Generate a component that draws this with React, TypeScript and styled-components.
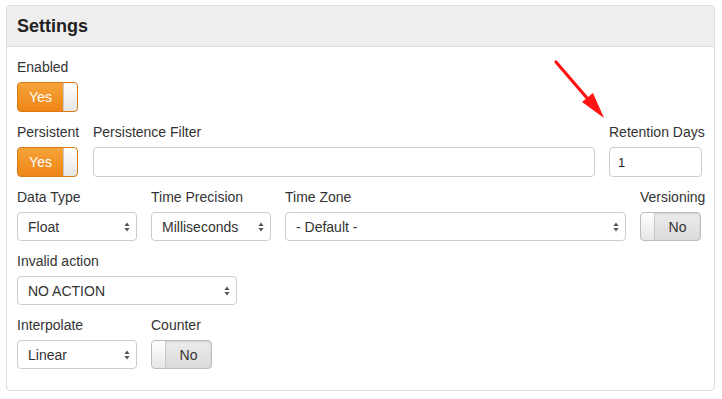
import React from "react";
import styled, { createGlobalStyle } from "styled-components";

const GlobalStyle = createGlobalStyle`
  html, body { margin: 0; padding: 0; background: #ffffff; }
  body { font-family: "Liberation Sans", Arial, sans-serif; color: #333333; }
  * { box-sizing: border-box; }
`;

const Page = styled.div`
  position: relative;
  width: 722px;
  height: 399px;
  padding: 5px 0 0 6px;
`;

const Panel = styled.div`
  width: 709px;
  height: 386px;
  border: 1px solid #dcdcdc;
  border-radius: 4px;
  background: #ffffff;
  overflow: hidden;
`;

const Header = styled.div`
  height: 41px;
  background: #eeeeee;
  border-bottom: 1px solid #dddddd;
  display: flex;
  align-items: center;
  padding: 0 10px;
`;

const Title = styled.h3`
  margin: 0;
  font-size: 18px;
  font-weight: bold;
  color: #222222;
  line-height: 20px;
`;

const Body = styled.div`
  padding: 10px 10px 0 10px;
  display: flex;
  flex-direction: column;
  gap: 10px;
`;

const Row = styled.div`
  display: flex;
  gap: 14px;
`;

const Field = styled.div<{ $w?: number }>`
  display: flex;
  flex-direction: column;
  width: ${(p) => (p.$w ? `${p.$w}px` : "auto")};
  flex: 0 0 auto;
`;

const Label = styled.label`
  font-size: 14px;
  line-height: 20px;
  height: 20px;
  margin-bottom: 5px;
  color: #333333;
  white-space: nowrap;
`;

const Toggle = styled.div<{ $on: boolean; $h: number }>`
  width: 61px;
  height: ${(p) => p.$h}px;
  border-radius: 4px;
  display: flex;
  flex-direction: ${(p) => (p.$on ? "row" : "row-reverse")};
  overflow: hidden;
  border: 1px solid ${(p) => (p.$on ? "#d97a16" : "#bdbdbd")};
  background: ${(p) =>
    p.$on
      ? "linear-gradient(to bottom, #f7a43a, #ee8516)"
      : "linear-gradient(to bottom, #ececec, #dadada)"};
  box-shadow: ${(p) => (p.$on ? "none" : "inset 0 1px 2px rgba(0,0,0,0.12)")};
`;

const ToggleText = styled.span<{ $on: boolean }>`
  flex: 1;
  display: flex;
  align-items: center;
  justify-content: center;
  font-size: 14px;
  color: ${(p) => (p.$on ? "#ffffff" : "#333333")};
  font-weight: normal;
`;

const Knob = styled.span<{ $on: boolean }>`
  width: 14px;
  height: 100%;
  background: linear-gradient(to bottom, #ffffff, #e6e6e6);
  border-${(p) => (p.$on ? "left" : "right")}: 1px solid #c8c8c8;
  border-radius: ${(p) => (p.$on ? "0 3px 3px 0" : "3px 0 0 3px")};
`;

const TextInput = styled.div<{ $h: number }>`
  height: ${(p) => p.$h}px;
  border: 1px solid #cccccc;
  border-radius: 4px;
  background: #ffffff;
  font-size: 13px;
  display: flex;
  align-items: center;
  padding: 0 8px;
  color: #222222;
`;

const Select = styled.div<{ $w?: number }>`
  width: ${(p) => (p.$w ? `${p.$w}px` : "100%")};
  height: 29px;
  border: 1px solid #cccccc;
  border-radius: 4px;
  background: #ffffff;
  font-size: 14px;
  color: #333333;
  display: flex;
  align-items: center;
  justify-content: space-between;
  padding: 0 6px 0 10px;
`;

const Arrows = () => (
  <svg width="6" height="10" viewBox="0 0 6 10">
    <path d="M3 0.5 L5.6 4 L0.4 4 Z" fill="#555" />
    <path d="M3 9.5 L5.6 6 L0.4 6 Z" fill="#555" />
  </svg>
);

const Annotation = styled.svg`
  position: absolute;
  left: 550px;
  top: 55px;
`;

const SwitchCtl = ({ on, h }: { on: boolean; h: number }) => (
  <Toggle $on={on} $h={h}>
    <ToggleText $on={on}>{on ? "Yes" : "No"}</ToggleText>
    <Knob $on={on} />
  </Toggle>
);

const SelectCtl = ({ value, w }: { value: string; w?: number }) => (
  <Select $w={w}>
    <span>{value}</span>
    <Arrows />
  </Select>
);

export default function App() {
  return (
    <Page>
      <GlobalStyle />
      <Panel>
        <Header>
          <Title>Settings</Title>
        </Header>
        <Body>
          <Row>
            <Field $w={61}>
              <Label>Enabled</Label>
              <SwitchCtl on h={30} />
            </Field>
          </Row>
          <Row>
            <Field $w={62}>
              <Label>Persistent</Label>
              <SwitchCtl on h={30} />
            </Field>
            <Field $w={502}>
              <Label>Persistence Filter</Label>
              <TextInput $h={30} />
            </Field>
            <Field $w={93}>
              <Label>Retention Days</Label>
              <TextInput $h={30}>1</TextInput>
            </Field>
          </Row>
          <Row>
            <Field $w={120}>
              <Label>Data Type</Label>
              <SelectCtl value="Float" />
            </Field>
            <Field $w={120}>
              <Label>Time Precision</Label>
              <SelectCtl value="Milliseconds" />
            </Field>
            <Field $w={341}>
              <Label>Time Zone</Label>
              <SelectCtl value="- Default -" />
            </Field>
            <Field $w={63}>
              <Label>Versioning</Label>
              <SwitchCtl on={false} h={29} />
            </Field>
          </Row>
          <Row>
            <Field $w={220}>
              <Label>Invalid action</Label>
              <SelectCtl value="NO ACTION" />
            </Field>
          </Row>
          <Row>
            <Field $w={120}>
              <Label>Interpolate</Label>
              <SelectCtl value="Linear" />
            </Field>
            <Field $w={61}>
              <Label>Counter</Label>
              <SwitchCtl on={false} h={29} />
            </Field>
          </Row>
        </Body>
      </Panel>
      <Annotation width="60" height="66" viewBox="0 0 60 66">
        <line x1="6" y1="7" x2="43" y2="50" stroke="#ff1414" strokeWidth="3.2" strokeLinecap="round" />
        <path d="M54 63 L32 47 L43 38 Z" fill="#ff1414" />
      </Annotation>
    </Page>
  );
}
